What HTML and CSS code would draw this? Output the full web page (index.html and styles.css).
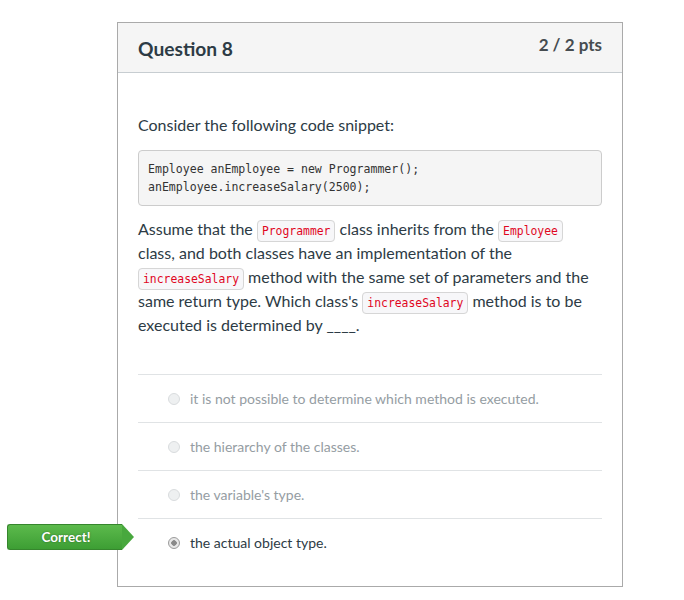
FILE: index.html
```html
<!DOCTYPE html>
<html>
<head>
<meta charset="utf-8">
<link rel="stylesheet" href="styles.css">
</head>
<body>
<div class="page">
  <div class="card">
    <div class="card-header">
      <h2 class="title">Question 8</h2>
      <div class="pts">2 / 2 pts</div>
    </div>
    <div class="card-body">
      <p class="intro">Consider the following code snippet:</p>
      <pre class="code">Employee anEmployee = new Programmer();
anEmployee.increaseSalary(2500);</pre>
      <p class="question">Assume that the <code>Programmer</code> class inherits from the <code>Employee</code> class, and both classes have an implementation of the <code>increaseSalary</code> method with the same set of parameters and the same return type. Which class's <code>increaseSalary</code> method is to be executed is determined by ____.</p>
      <div class="answers">
        <div class="answer muted"><span class="radio"></span><span>it is not possible to determine which method is executed.</span></div>
        <div class="answer muted"><span class="radio"></span><span>the hierarchy of the classes.</span></div>
        <div class="answer muted"><span class="radio"></span><span>the variable's type.</span></div>
        <div class="answer selected">
          <div class="tag">Correct!</div>
          <span class="radio checked"></span><span>the actual object type.</span>
        </div>
      </div>
    </div>
  </div>
</div>
</body>
</html>
```
FILE: styles.css
```css
html, body {
  margin: 0;
  padding: 0;
  background: #ffffff;
}
body {
  font-family: Lato, "Open Sans", sans-serif;
  color: #2d3b45;
}
.page {
  padding: 22px 0 0 117px;
}
.card {
  width: 504px;
  border: 1px solid #aaaaaa;
  background: #fff;
}
.card-header {
  background: #f5f5f5;
  border-bottom: 1px solid #c7cdd1;
  height: 49px;
  display: flex;
  justify-content: space-between;
  align-items: flex-start;
  padding: 0 20px;
}
.title {
  margin: 0;
  font-size: 19.2px;
  font-weight: 700;
  line-height: 24px;
  padding-top: 14px;
}
.pts {
  font-size: 17px;
  font-weight: 700;
  line-height: 20px;
  padding-top: 12px;
  color: #464c50;
}
.card-body {
  padding: 40px 20px 20px 20px;
}
.intro {
  margin: 0;
  font-size: 16px;
  line-height: 24px;
}
.code {
  margin: 13px 0 0 0;
  background: #f5f5f5;
  border: 1px solid #cccccc;
  border-radius: 4px;
  padding: 9px 9px;
  font-family: "DejaVu Sans Mono", monospace;
  font-size: 11.55px;
  line-height: 18px;
  color: #333;
}
.question {
  margin: 11px 0 0 0;
  font-size: 16px;
  line-height: 24px;
}
.question code {
  font-family: "DejaVu Sans Mono", monospace;
  font-size: 11.4px;
  line-height: 1;
  color: #e0061f;
  background: #f7f7f9;
  border: 1px solid #d6d6d6;
  border-radius: 4px;
  padding: 3px 4px;
}
.answers {
  margin-top: 37px;
}
.answer {
  position: relative;
  height: 47px;
  border-top: 1px solid #e0e3e5;
  display: flex;
  align-items: center;
  padding-left: 30px;
  font-size: 14px;
}
.answer.muted {
  color: #959da3;
}
.answer.selected {
  color: #2d3b45;
}
.radio {
  width: 12px;
  height: 12px;
  border-radius: 50%;
  border: 1px solid #d9dcde;
  background: #eef0f1;
  margin-right: 10px;
  margin-top: 1px;
  box-sizing: border-box;
  flex: none;
}
.radio.checked {
  border: 1px solid #9a9a9a;
  background: radial-gradient(circle, #8a8a8a 0 2.5px, #e8e8e8 3px);
}
.tag {
  position: absolute;
  left: -131px;
  top: 5px;
  width: 115px;
  height: 26px;
  box-sizing: border-box;
  background: linear-gradient(#5cba4c, #3d9e34);
  border: 1px solid #36862d;
  border-right: none;
  border-radius: 3px 0 0 3px;
  color: #fff;
  font-weight: 700;
  font-size: 13.5px;
  text-shadow: 0 0 2px rgba(0,0,0,0.4);
  display: flex;
  align-items: center;
  justify-content: center;
  padding-left: 2px;
}
.tag::after {
  content: "";
  position: absolute;
  right: -12px;
  top: -1px;
  width: 0;
  height: 0;
  border-top: 13px solid transparent;
  border-bottom: 13px solid transparent;
  border-left: 12px solid #48a83e;
}
```
